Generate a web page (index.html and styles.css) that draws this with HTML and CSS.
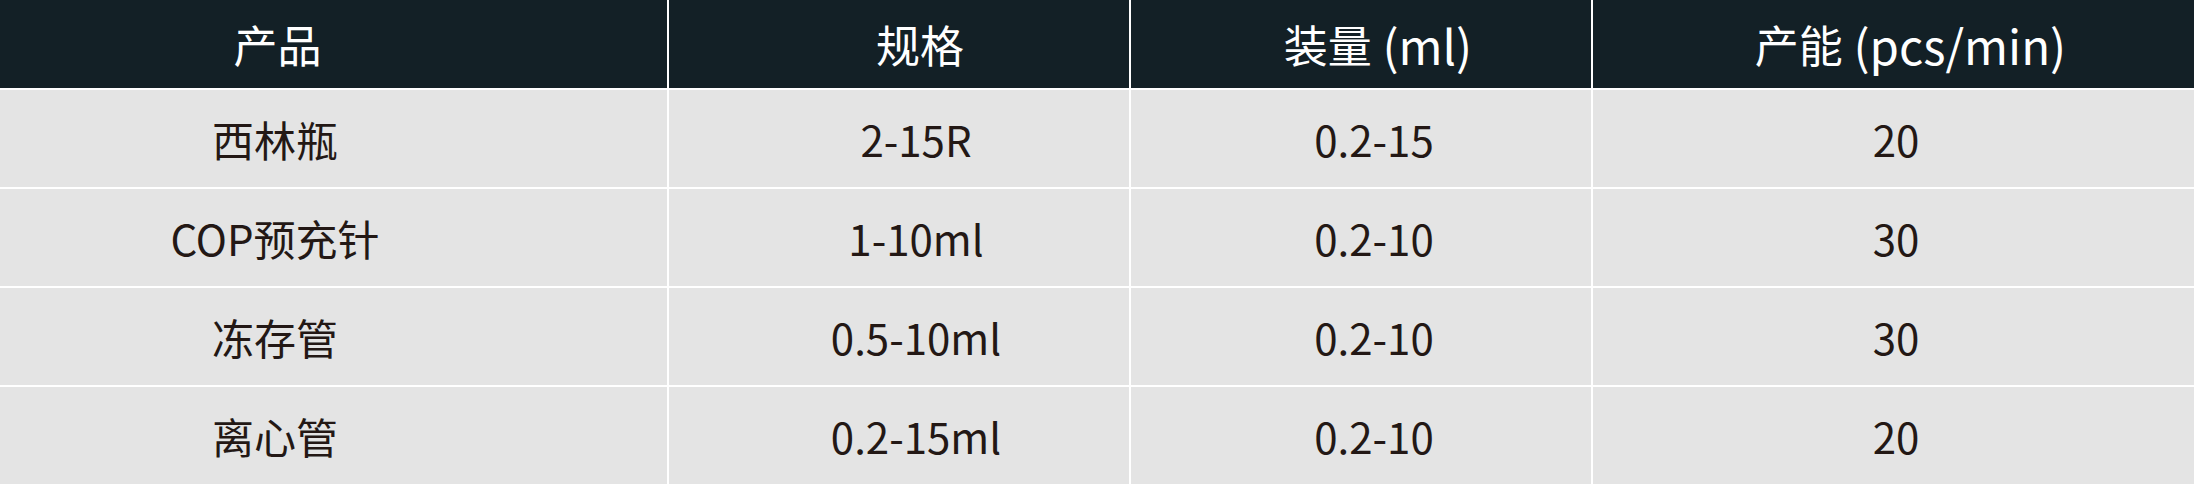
FILE: index.html
```html
<!DOCTYPE html>
<html lang="zh-CN">
<head>
<meta charset="utf-8">
<link rel="stylesheet" href="styles.css">
</head>
<body>
<div class="table">
  <div class="cell head h1">产品</div>
  <div class="cell head h2">规格</div>
  <div class="cell head h3">装量<span class="unit"> (ml)</span></div>
  <div class="cell head h4">产能<span class="unit"> (pcs/min)</span></div>

  <div class="cell c1">西林瓶</div>
  <div class="cell c2">2-15R</div>
  <div class="cell c3">0.2-15</div>
  <div class="cell c4">20</div>

  <div class="cell c1">COP预充针</div>
  <div class="cell c2">1-10ml</div>
  <div class="cell c3">0.2-10</div>
  <div class="cell c4">30</div>

  <div class="cell c1">冻存管</div>
  <div class="cell c2">0.5-10ml</div>
  <div class="cell c3">0.2-10</div>
  <div class="cell c4">30</div>

  <div class="cell c1">离心管</div>
  <div class="cell c2">0.2-15ml</div>
  <div class="cell c3">0.2-10</div>
  <div class="cell c4">20</div>
</div>
</body>
</html>
```

FILE: styles.css
```css
html, body {
  margin: 0;
  padding: 0;
  background: #ffffff;
}

.table {
  width: 2194px;
  height: 484px;
  display: grid;
  grid-template-columns: 667px 460px 460px 601px;
  grid-template-rows: 88px repeat(4, 1fr);
  gap: 2px;
  background: #ffffff;
  font-family: "Noto Sans CJK SC", "Noto Sans", sans-serif;
  font-size: 42px;
  color: #231815;
}

.cell {
  display: flex;
  align-items: center;
  justify-content: center;
  background: #e4e4e4;
  white-space: nowrap;
}

.cell.head {
  background: #132026;
  color: #ffffff;
  font-size: 44px;
}

.unit {
  font-size: 1.08em;
  white-space: pre;
}

.h1 { padding-right: 112px; }
.h2 { padding-left: 42px; }
.h3 { padding-left: 34px; }
.h4 { padding-left: 34px; }

.c1 { padding-right: 117px; }
.c2 { padding-left: 34px; }
.c3 { padding-left: 26px; }
.c4 { padding-left: 5px; }
```
